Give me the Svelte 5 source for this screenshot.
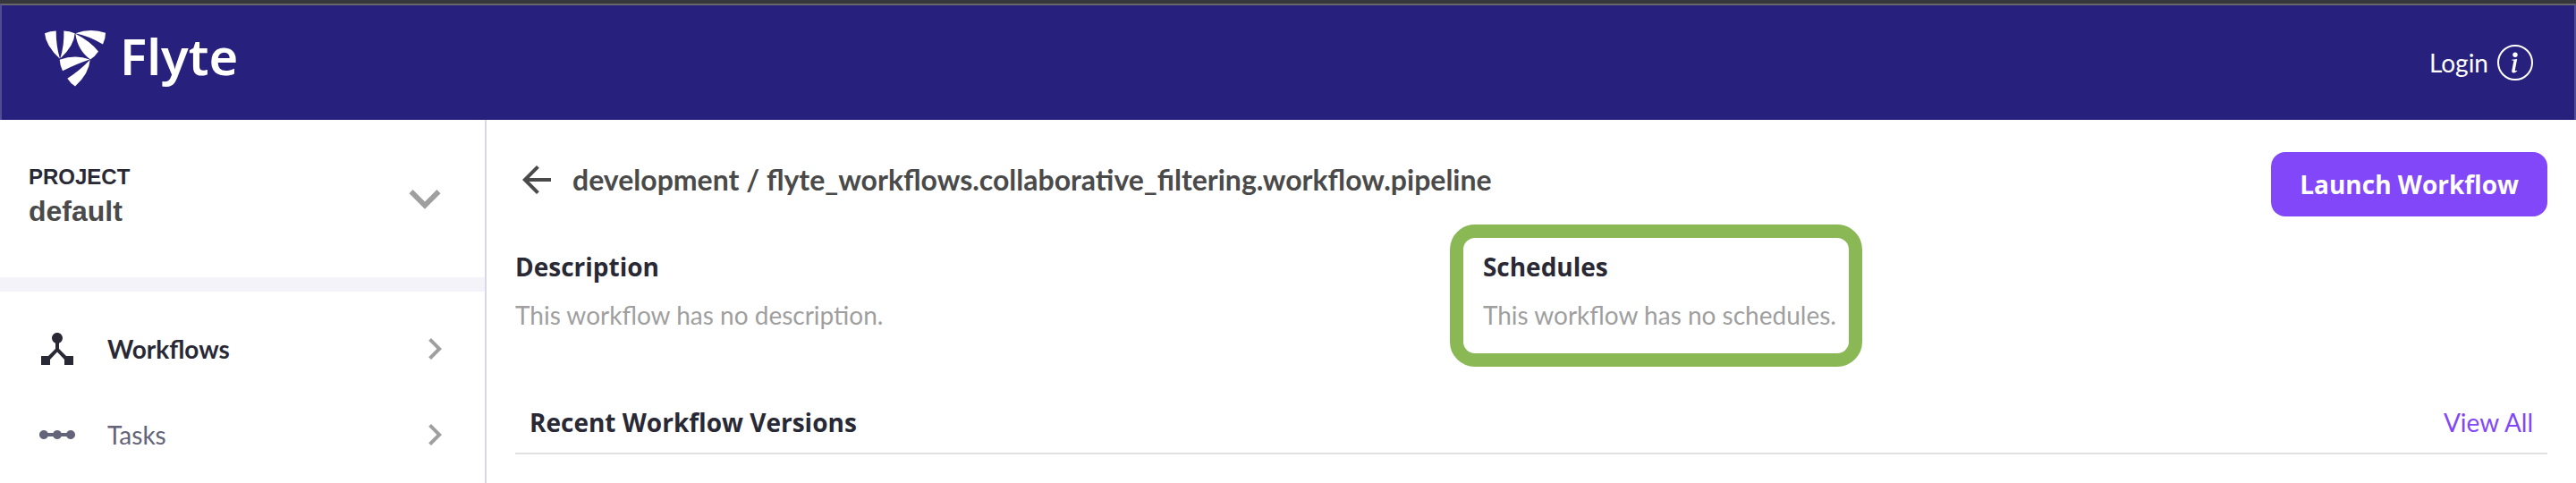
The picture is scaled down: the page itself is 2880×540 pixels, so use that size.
<script>
  const navItems = [
    {
      label: 'Workflows',
      active: true,
      icon: 'M17 16l-4-4V8.82C14.16 8.4 15 7.3 15 6c0-1.66-1.34-3-3-3S9 4.34 9 6c0 1.3.84 2.4 2 2.82V12l-4 4H3v5h5v-3.05l4-4.2 4 4.2V21h5v-5h-4z'
    },
    {
      label: 'Tasks',
      active: false,
      icon: 'M19.5 9.5c-1.03 0-1.9.62-2.29 1.5h-2.92C13.9 10.12 13.03 9.5 12 9.5s-1.9.62-2.29 1.5H6.79c-.39-.88-1.26-1.5-2.29-1.5C3.12 9.5 2 10.62 2 12s1.12 2.5 2.5 2.5c1.03 0 1.9-.62 2.29-1.5h2.92c.39.88 1.26 1.5 2.29 1.5s1.9-.62 2.29-1.5h2.92c.39.88 1.26 1.5 2.29 1.5 1.38 0 2.5-1.12 2.5-2.5s-1.12-2.5-2.5-2.5z'
    }
  ];
</script>

<div class="page">
  <header class="topbar">
    <a class="brand" href="#home">
      <svg class="mark" viewBox="0 0 204 188" aria-hidden="true">
        <path d="M0 9Q18 1 38 1Q38 52 51 95Q3 50 0 9Z" />
        <path d="M64 1Q84 1 101 9Q99 50 52 94Q66 48 64 1Z" />
        <path d="M103 9Q155-9 204 8Q204 28 195 46Q152 19 103 9Z" />
        <path d="M103 11Q151 35 180 70Q169 87 153 97Q110 66 103 11Z" />
        <path d="M50 98Q102 78 151 97Q109 111 60 135Q51 117 50 98Z" />
        <path d="M152 98Q149 145 102 187Q86 177 76 161Q118 134 152 98Z" />
      </svg>
      <span>Flyte</span>
    </a>
    <div class="account">
      <a href="#login">Login</a>
      <button class="info" aria-label="About">
        <svg viewBox="0 0 40 40" aria-hidden="true">
          <circle cx="20" cy="20" r="19" fill="none" stroke="currentColor" stroke-width="2" />
          <circle cx="20" cy="11.3" r="2.7" />
          <path d="M16.2 16.800l6-.9-2.400 12.300c-.1.8.1 1.100.7 1l1.500-.5.2.7c-1.300 1.300-2.800 2-4.100 2-1.500 0-2.100-1-1.800-2.600l2-10.400c.1-.5-.1-.8-.6-.8h-1.500z" />
        </svg>
      </button>
    </div>
  </header>

  <div class="body">
    <aside class="sidebar">
      <button class="project">
        <span class="project-text">
          <span class="project-label">PROJECT</span>
          <span class="project-name">default</span>
        </span>
        <svg viewBox="0 0 24 24" aria-hidden="true">
          <path d="M16.59 8.59L12 13.17 7.41 8.59 6 10l6 6 6-6z" />
        </svg>
      </button>
      <nav>
        {#each navItems as item}
          <a href="#{item.label.toLowerCase()}" class:active={item.active}>
            <svg class="icon" viewBox="0 0 24 24" aria-hidden="true"><path d={item.icon} /></svg>
            <span>{item.label}</span>
            <svg class="icon chevron" viewBox="0 0 24 24" aria-hidden="true">
              <path d="M10 6L8.59 7.41 13.17 12l-4.58 4.59L10 18l6-6z" />
            </svg>
          </a>
        {/each}
      </nav>
    </aside>

    <main>
      <div class="title-row">
        <div class="title">
          <a class="back" href="#back" aria-label="Back">
            <svg class="icon" viewBox="0 0 24 24" aria-hidden="true">
              <path d="M20 11H7.83l5.59-5.59L12 4l-8 8 8 8 1.41-1.41L7.83 13H20v-2z" />
            </svg>
          </a>
          <h1>development / flyte_workflows.collaborative_filtering.workflow.pipeline</h1>
        </div>
        <button class="launch">Launch Workflow</button>
      </div>

      <div class="details">
        <section>
          <h2>Description</h2>
          <p>This workflow has no description.</p>
        </section>
        <section class="highlight">
          <h2>Schedules</h2>
          <p>This workflow has no schedules.</p>
        </section>
      </div>

      <div class="versions">
        <h2>Recent Workflow Versions</h2>
        <a href="#versions">View All</a>
      </div>
    </main>
  </div>
</div>

<style>
  :global(body) {
    background: #fff;
  }

  .page {
    min-height: 100vh;
    box-sizing: border-box;
    border-top: 4px solid #36373b;
    display: flex;
    flex-direction: column;
    font-family: Lato, sans-serif;
    font-size: 28px;
    line-height: 40px;
    color: #292936;
  }

  h1,
  h2,
  p {
    margin: 0;
  }

  a {
    color: inherit;
    text-decoration: none;
  }

  button {
    border: 0;
    padding: 0;
    background: none;
    color: inherit;
    font: inherit;
    cursor: pointer;
  }

  svg {
    display: block;
    flex: none;
    fill: currentColor;
  }

  .icon {
    width: 48px;
    height: 48px;
  }

  .topbar {
    display: flex;
    align-items: center;
    justify-content: space-between;
    height: 128px;
    padding: 0 46px 0 48px;
    border: 2px solid #524b96;
    border-top-color: #66676b;
    border-bottom: 0;
    background: #28207d;
    color: #fff;
  }

  .brand {
    display: flex;
    align-items: center;
    gap: 16px;
    padding-bottom: 10px;
    font: 600 56px/80px "Noto Sans", sans-serif;
  }

  .brand span {
    padding-bottom: 6px;
  }

  .mark {
    width: 68px;
    height: 63px;
  }

  .account {
    display: flex;
    align-items: center;
    gap: 10px;
  }

  .info svg {
    width: 40px;
    height: 40px;
  }

  .body {
    flex: 1;
    display: flex;
  }

  .sidebar {
    flex: none;
    width: 542px;
    border-right: 2px solid #d9d8e4;
  }

  .project {
    display: flex;
    align-items: center;
    justify-content: space-between;
    width: 100%;
    height: 192px;
    padding: 0 32px;
    border-bottom: 16px solid #f3f3f9;
    font-family: "Liberation Sans", Arial, sans-serif;
    font-weight: 700;
    line-height: 36px;
    text-align: left;
  }

  .project-text {
    display: flex;
    flex-direction: column;
    padding-bottom: 8px;
  }

  .project-label {
    font-size: 24px;
  }

  .project-name {
    font-size: 32px;
    line-height: 40px;
    color: #4a4a4a;
  }

  .project svg {
    width: 70px;
    height: 70px;
    color: #9f9f9f;
  }

  nav {
    padding-top: 16px;
  }

  nav a {
    display: flex;
    align-items: center;
    gap: 32px;
    height: 96px;
    padding: 0 32px 0 40px;
    color: #636379;
  }

  nav a.active {
    color: #292936;
    font-weight: 700;
  }

  nav .chevron {
    margin-left: auto;
    color: #9f9f9f;
  }

  main {
    flex: 1;
    min-width: 0;
    padding: 36px 32px 0;
  }

  .title-row {
    display: flex;
    align-items: center;
    justify-content: space-between;
  }

  .title {
    display: flex;
    align-items: center;
    gap: 16px;
    padding-bottom: 10px;
    color: #4a4a4a;
  }

  h1 {
    font-size: 32px;
    line-height: 40px;
  }

  h2,
  .launch {
    font: 700 28px/40px "Open Sans", sans-serif;
  }

  .launch {
    padding: 16px 32px;
    border-radius: 16px;
    background: #8147f9;
    color: #fff;
  }

  .details {
    display: grid;
    grid-template-columns: 10fr 11fr;
    padding-top: 36px;
  }

  .details h2 {
    margin-bottom: 14px;
  }

  .details p {
    color: #9f9f9f;
  }

  .highlight {
    position: relative;
    justify-self: start;
  }

  .highlight::after {
    content: "";
    position: absolute;
    inset: -27px -29px -38px -37px;
    border: 15px solid #8ab855;
    border-radius: 28px;
    pointer-events: none;
  }

  .versions {
    display: flex;
    justify-content: space-between;
    align-items: center;
    margin-top: 80px;
    padding: 0 16px 14px;
    border-bottom: 2px solid #e0e0e0;
  }

  .versions a {
    color: #8147f9;
  }
</style>
